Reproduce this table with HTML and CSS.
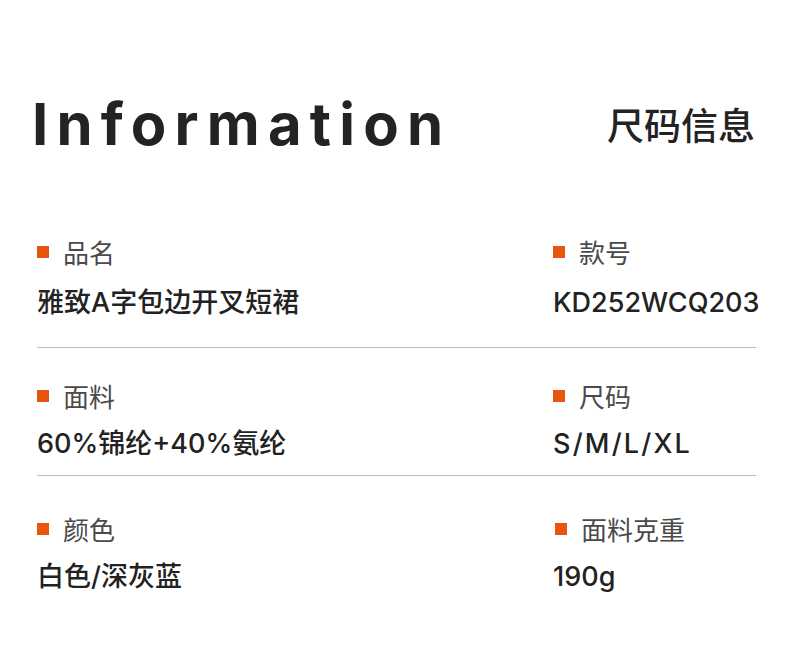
FILE: index.html
```html
<!DOCTYPE html>
<html lang="zh-CN">
<head>
<meta charset="utf-8">
<link rel="stylesheet" href="styles.css">
</head>
<body>
<div class="page">
  <header class="head">
    <h1 class="title-en">Information</h1>
    <div class="title-cn">尺码信息</div>
  </header>
  <section class="table">
    <div class="row row-1">
      <div class="cell">
        <div class="label"><span class="dot"></span>品名</div>
        <div class="value">雅致A字包边开叉短裙</div>
      </div>
      <div class="cell">
        <div class="label"><span class="dot"></span>款号</div>
        <div class="value">KD252WCQ203</div>
      </div>
    </div>
    <div class="row row-2">
      <div class="cell">
        <div class="label"><span class="dot"></span>面料</div>
        <div class="value">60%锦纶+40%氨纶</div>
      </div>
      <div class="cell">
        <div class="label"><span class="dot"></span>尺码</div>
        <div class="value value-wide">S/M/L/XL</div>
      </div>
    </div>
    <div class="row row-3">
      <div class="cell">
        <div class="label"><span class="dot"></span>颜色</div>
        <div class="value">白色/深灰蓝</div>
      </div>
      <div class="cell">
        <div class="label label-shift"><span class="dot"></span>面料克重</div>
        <div class="value">190g</div>
      </div>
    </div>
  </section>
</div>
</body>
</html>
```

FILE: styles.css
```css
* { box-sizing: border-box; }
html, body { margin: 0; padding: 0; background: #ffffff; }
body {
  font-family: "Inter", "Noto Sans CJK SC", sans-serif;
  color: #222222;
  width: 790px;
  height: 650px;
  overflow: hidden;
}
.page {
  padding: 95px 34px 0 37px;
}
.head {
  display: flex;
  justify-content: space-between;
  align-items: center;
}
.title-en {
  margin: 0 0 0 -5px;
  font-family: "Inter", sans-serif;
  font-weight: 700;
  font-size: 58px;
  line-height: 58px;
  letter-spacing: 8.2px;
  color: #232323;
}
.title-cn {
  font-family: "Noto Sans CJK SC", sans-serif;
  font-weight: 500;
  font-size: 37px;
  line-height: 37px;
  color: #232323;
  margin-right: 1px;
}
.table {
  margin-top: 84px;
}
.row {
  display: grid;
  grid-template-columns: 516px 1fr;
  border-bottom: 1px solid #bdbdbd;
}
.row:last-child { border-bottom: none; }
.row-1 { padding: 0 0 28px; }
.row-2 { padding: 33px 0 15px; }
.row-3 { padding: 38px 0 0; }
.row-2 .value, .row-3 .value { margin-top: 17px; }
.label {
  display: flex;
  align-items: center;
  font-family: "Noto Sans CJK SC", sans-serif;
  font-weight: 400;
  font-size: 26px;
  line-height: 30px;
  color: #4a4a4a;
}
.label-shift { padding-left: 2px; }
.dot {
  width: 12px;
  height: 12px;
  background: #e8560e;
  margin-right: 14px;
  flex: none;
}
.value {
  margin-top: 20px;
  font-family: "Inter", "Noto Sans CJK SC", sans-serif;
  font-weight: 500;
  font-size: 27px;
  line-height: 32px;
  color: #222222;
}
.value-wide { letter-spacing: 2.2px; }
```
